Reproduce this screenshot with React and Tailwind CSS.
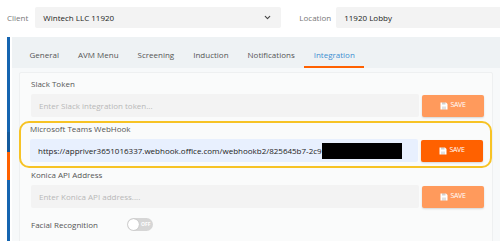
import React from 'react';
import { ChevronDown } from 'lucide-react';

const SaveIcon = () => (
  <svg width="8" height="8" viewBox="0 0 16 16" className="mr-[2px]">
    <path d="M1 1h11l3 3v11H1z" fill="currentColor" />
    <rect x="4" y="1" width="7" height="4" fill="rgba(0,0,0,0.18)" />
    <rect x="4" y="9" width="8" height="6" fill="rgba(0,0,0,0.12)" />
  </svg>
);

const SaveButton = ({ active }) => (
  <button
    className={`ml-[3px] w-[62px] h-[22px] flex items-center justify-center rounded-[2px] text-white text-[7px] tracking-[-0.3px] shadow-[0_1px_2px_rgba(0,0,0,0.15)] ${
      active ? 'bg-[#ff6100]' : 'bg-[#ff9a5c]'
    }`}
  >
    <SaveIcon />
    <span>SAVE</span>
  </button>
);

const Field = ({ label, placeholder, value, active }) => (
  <div>
    <div className="text-[8px] text-[#555] leading-[12px] mb-[4px]">{label}</div>
    <div className="flex items-center">
      <div
        className={`w-[388px] h-[23px] rounded-[2px] flex items-center pl-[8px] text-[8px] whitespace-nowrap overflow-hidden ${
          active ? 'bg-[#e8f0fe] text-[#222]' : 'bg-[#f3f3f3] text-[#b8b8b8]'
        }`}
      >
        {value ? (
          <>
            <span>{value}</span>
            <span className="inline-block w-[80px] h-[16px] bg-black shrink-0" />
          </>
        ) : (
          placeholder
        )}
      </div>
      <SaveButton active={active} />
    </div>
  </div>
);

const tabs = ['General', 'AVM Menu', 'Screening', 'Induction', 'Notifications', 'Integration'];

export default function App() {
  return (
    <div
      className="w-[500px] h-[241px] bg-white overflow-hidden"
      style={{ fontFamily: '"Open Sans", "Noto Sans", sans-serif' }}
    >
      {/* top selectors */}
      <div className="flex items-center pt-[7px] pl-[7px]">
        <span className="text-[8px] text-[#777] mr-[7px]">Client</span>
        <div className="w-[246px] h-[21px] bg-[#f3f3f3] rounded-[2px] flex items-center justify-between pl-[8px] pr-[9px]">
          <span className="text-[8px] text-[#222]">Wintech LLC 11920</span>
          <ChevronDown className="w-[9px] h-[9px] text-[#444]" strokeWidth={3} />
        </div>
        <span className="text-[8px] text-[#777] ml-[18px] mr-[5px]">Location</span>
        <div className="flex-1 h-[21px] bg-[#f3f3f3] rounded-l-[2px] flex items-center pl-[8px]">
          <span className="text-[8px] text-[#222]">11920 Lobby</span>
        </div>
      </div>

      {/* panel */}
      <div className="flex mt-[9px] ml-[7px]">
        <div className="w-[3px] shrink-0 flex flex-col">
          <div className="h-[95px] bg-[#1565b0]" />
          <div className="h-[20px] bg-[#145a9c]" />
          <div className="h-[28px] bg-[#ff6100]" />
          <div className="flex-1 bg-[#1565b0]" />
        </div>
        <div className="flex-1 ml-[2px] bg-[#f7f9fa]">
          <div className="h-[31px] bg-[#eef2f4] flex items-end pl-[8px]">
            {tabs.map((t) => (
              <div
                key={t}
                className={`px-[9.5px] pt-[12px] pb-[6px] leading-[11px] text-[8px] border-b-[2px] ${
                  t === 'Integration'
                    ? 'text-[#3d8fd1] border-[#ff6100]'
                    : 'text-[#555] border-transparent'
                }`}
              >
                {t}
              </div>
            ))}
          </div>

          <div className="mt-[4px] ml-[7px] mr-[10px] bg-[#fafbfb] border border-[#eef0f1] rounded-[2px] pt-[5px] pb-[20px] pl-[10px]">
            <div className="pl-[1px]">
              <Field label="Slack Token" placeholder="Enter Slack integration token..." />
            </div>
            <div className="-ml-[11px] mt-[4px] w-[473px] border-[2px] border-[#f7c325] rounded-[10px] pl-[9px] pt-0 pb-[4px]">
              <Field
                label="Microsoft Teams WebHook"
                active
                value="https://appriver3651016337.webhook.office.com/webhookb2/825645b7-2c9"
              />
            </div>
            <div className="pl-[1px] mt-[1px]">
              <Field label="Konica API Address" placeholder="Enter Konica API address...." />
            </div>
            <div className="flex items-center mt-[10px] pl-[1px]">
              <span className="text-[8px] text-[#555] w-[96px]">Facial Recognition</span>
              <div className="w-[26px] h-[13px] rounded-full bg-[#d6d6d6] flex items-center">
                <div className="w-[11px] h-[11px] rounded-full bg-white ml-[1px] shadow-[0_0_1px_rgba(0,0,0,0.3)]" />
                <span className="text-[5px] text-white ml-[2px] font-bold">OFF</span>
              </div>
            </div>
          </div>
        </div>
      </div>
    </div>
  );
}
